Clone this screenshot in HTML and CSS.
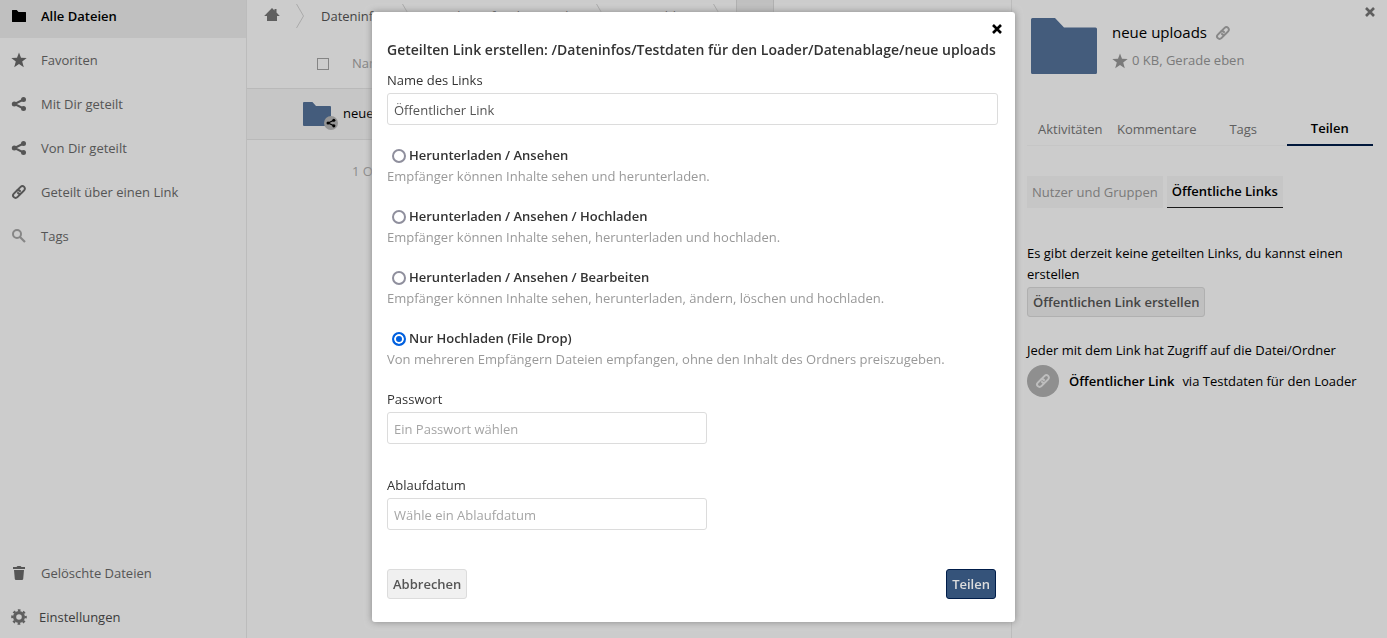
FILE: index.html
```html
<!DOCTYPE html>
<html lang="de">
<head>
  <meta charset="UTF-8">
  <meta name="viewport" content="width=device-width, initial-scale=1.0">
  <title>neue uploads - Dateien</title>
  <link rel="stylesheet" href="styles.css">
</head>
<body>

  <!-- Shared icon shapes -->
  <svg class="sprite" aria-hidden="true">
    <symbol id="icon-folder" viewBox="0 0 14 12">
      <path d="M0.5 0H4.7L6.5 2H13.5Q14 2 14 2.5V11.5Q14 12 13.5 12H0.5Q0 12 0 11.5V0.5Q0 0 0.5 0Z"/>
    </symbol>
    <symbol id="icon-folder-big" viewBox="0 0 66 56">
      <path d="M1.5 0H24L33 9.5H64.5Q66 9.5 66 11V54.5Q66 56 64.5 56H1.5Q0 56 0 54.5V1.5Q0 0 1.5 0Z"/>
    </symbol>
    <symbol id="icon-star" viewBox="0 0 16 16">
      <path d="M8 .4 10 5.8 15.7 6 11.2 9.5 12.8 15.2 8 11.9 3.2 15.2 4.8 9.5 .3 6 6 5.8Z"/>
    </symbol>
    <symbol id="icon-share" viewBox="0 0 16 16">
      <path d="M12.5 3.5 3.5 8 12.5 12.5" fill="none" stroke="currentColor" stroke-width="2"/>
      <circle cx="12.5" cy="3.5" r="2.5"/>
      <circle cx="3.3" cy="8" r="2.5"/>
      <circle cx="12.5" cy="12.5" r="2.5"/>
    </symbol>
    <symbol id="icon-link" viewBox="0 0 16 16">
      <g fill="none" stroke="currentColor" stroke-width="2" stroke-linecap="round" transform="rotate(-45 8 8)">
        <path d="M7.5 10.5H3.2A2.5 2.5 0 0 1 3.2 5.5H7A2.5 2.5 0 0 1 9.4 8"/>
        <path d="M8.5 5.5H12.8A2.5 2.5 0 0 1 12.8 10.5H9A2.5 2.5 0 0 1 6.6 8"/>
      </g>
    </symbol>
    <symbol id="icon-search" viewBox="0 0 16 16">
      <circle cx="6" cy="6" r="4" fill="none" stroke="currentColor" stroke-width="2"/>
      <path d="M9 9 14 14" stroke="currentColor" stroke-width="2.2"/>
    </symbol>
    <symbol id="icon-trash" viewBox="0 0 16 16">
      <path d="M6.5 1H9.5L10.5 2H14V4H2V2H5.5ZM3 5H13L12.2 14Q12 15 11 15H5Q4 15 3.8 14Z"/>
    </symbol>
    <symbol id="icon-gear" viewBox="0 0 16 16">
      <circle cx="8" cy="8" r="4.4" fill="none" stroke="currentColor" stroke-width="3.2"/>
      <circle cx="8" cy="8" r="6.7" fill="none" stroke="currentColor" stroke-width="2.2" stroke-dasharray="2.63 2.63" stroke-dashoffset="1.315"/>
    </symbol>
    <symbol id="icon-home" viewBox="0 0 16 16">
      <path d="M8 1 10.5 3.5V2H12.5V5.5L15.8 9H13V14H3V9H.2Z"/>
    </symbol>
    <symbol id="icon-close" viewBox="0 0 12 12">
      <path d="M2 2 10 10M10 2 2 10" stroke="currentColor" stroke-width="2.6"/>
    </symbol>
    <symbol id="icon-chevron" viewBox="0 0 8 24">
      <path d="M.5 0 7.5 12 .5 24" fill="none" stroke="currentColor"/>
    </symbol>
  </svg>

  <div class="app">
    <nav class="sidebar">
      <ul class="nav-list">
        <li><a class="nav-item active" href="#"><svg class="icon"><use href="#icon-folder"/></svg>Alle Dateien</a></li>
        <li><a class="nav-item" href="#"><svg class="icon"><use href="#icon-star"/></svg>Favoriten</a></li>
        <li><a class="nav-item" href="#"><svg class="icon"><use href="#icon-share"/></svg>Mit Dir geteilt</a></li>
        <li><a class="nav-item" href="#"><svg class="icon"><use href="#icon-share"/></svg>Von Dir geteilt</a></li>
        <li><a class="nav-item" href="#"><svg class="icon"><use href="#icon-link"/></svg>Geteilt über einen Link</a></li>
        <li><a class="nav-item" href="#"><svg class="icon faded"><use href="#icon-search"/></svg>Tags</a></li>
      </ul>
      <div class="nav-bottom">
        <a class="nav-item" href="#"><svg class="icon"><use href="#icon-trash"/></svg>Gelöschte Dateien</a>
        <button class="nav-item settings" type="button"><svg class="icon"><use href="#icon-gear"/></svg>Einstellungen</button>
      </div>
    </nav>

    <main class="content">
      <div class="breadcrumb">
        <a class="home" href="#" aria-label="Start"><svg class="icon"><use href="#icon-home"/></svg></a>
        <svg class="chevron"><use href="#icon-chevron"/></svg>
        <a class="crumb" href="#">Dateninfos</a>
        <svg class="chevron"><use href="#icon-chevron"/></svg>
        <a class="crumb" href="#">Testdaten für den Loader</a>
        <svg class="chevron"><use href="#icon-chevron"/></svg>
        <a class="crumb" href="#">Datenablage</a>
        <svg class="chevron"><use href="#icon-chevron"/></svg>
        <button class="new-button" type="button">+</button>
      </div>

      <table class="files">
        <thead>
          <tr>
            <th class="select-cell"><input class="checkbox" type="checkbox" aria-label="Alle auswählen"></th>
            <th class="name-head">Name</th>
          </tr>
        </thead>
        <tbody>
          <tr class="file-row">
            <td class="thumb-cell">
              <div class="thumb">
                <svg class="thumb-folder"><use href="#icon-folder"/></svg>
                <span class="badge"><svg><use href="#icon-share"/></svg></span>
              </div>
            </td>
            <td>neue uploads</td>
          </tr>
        </tbody>
        <tfoot>
          <tr>
            <td></td>
            <td class="summary">1 Ordner</td>
          </tr>
        </tfoot>
      </table>
    </main>

    <aside class="details">
      <button class="close details-close" type="button" aria-label="Details schließen"><svg><use href="#icon-close"/></svg></button>
      <div class="file-info">
        <svg class="preview"><use href="#icon-folder-big"/></svg>
        <div>
          <h2 class="file-name">neue uploads <svg class="icon"><use href="#icon-link"/></svg></h2>
          <div class="file-meta"><svg class="icon"><use href="#icon-star"/></svg>0 KB, Gerade eben</div>
        </div>
      </div>

      <div class="tabs">
        <button class="tab" type="button">Aktivitäten</button>
        <button class="tab" type="button">Kommentare</button>
        <button class="tab" type="button">Tags</button>
        <button class="tab selected" type="button">Teilen</button>
      </div>

      <div class="subtabs">
        <button class="subtab" type="button">Nutzer und Gruppen</button>
        <button class="subtab selected" type="button">Öffentliche Links</button>
      </div>

      <p class="hint">Es gibt derzeit keine geteilten Links, du kannst einen erstellen</p>
      <button class="button" type="button">Öffentlichen Link erstellen</button>

      <p class="access">Jeder mit dem Link hat Zugriff auf die Datei/Ordner</p>
      <div class="share-entry">
        <span class="avatar"><svg class="icon"><use href="#icon-link"/></svg></span>
        <strong>Öffentlicher Link</strong>
        <span>via Testdaten für den Loader</span>
      </div>
    </aside>
  </div>

  <div class="overlay">
    <form class="dialog" role="dialog" aria-labelledby="dialog-title">
      <button class="close dialog-close" type="button" aria-label="Schließen"><svg><use href="#icon-close"/></svg></button>
      <h1 class="dialog-title" id="dialog-title">Geteilten Link erstellen: /Dateninfos/Testdaten für den Loader/Datenablage/neue uploads</h1>

      <div class="field">
        <label for="link-name">Name des Links</label>
        <input class="text-input" id="link-name" type="text" value="Öffentlicher Link">
      </div>

      <div class="options">
        <div>
          <div class="option">
            <input type="radio" name="permission" id="perm-read">
            <label for="perm-read">Herunterladen / Ansehen</label>
          </div>
          <p>Empfänger können Inhalte sehen und herunterladen.</p>
        </div>
        <div>
          <div class="option">
            <input type="radio" name="permission" id="perm-upload">
            <label for="perm-upload">Herunterladen / Ansehen / Hochladen</label>
          </div>
          <p>Empfänger können Inhalte sehen, herunterladen und hochladen.</p>
        </div>
        <div>
          <div class="option">
            <input type="radio" name="permission" id="perm-edit">
            <label for="perm-edit">Herunterladen / Ansehen / Bearbeiten</label>
          </div>
          <p>Empfänger können Inhalte sehen, herunterladen, ändern, löschen und hochladen.</p>
        </div>
        <div>
          <div class="option">
            <input type="radio" name="permission" id="perm-drop" checked>
            <label for="perm-drop">Nur Hochladen (File Drop)</label>
          </div>
          <p>Von mehreren Empfängern Dateien empfangen, ohne den Inhalt des Ordners preiszugeben.</p>
        </div>
      </div>

      <div class="field short">
        <label for="password">Passwort</label>
        <input class="text-input" id="password" type="password" placeholder="Ein Passwort wählen">
      </div>
      <div class="field short expiry">
        <label for="expiry">Ablaufdatum</label>
        <input class="text-input" id="expiry" type="text" placeholder="Wähle ein Ablaufdatum">
      </div>

      <div class="actions">
        <button class="button" type="button">Abbrechen</button>
        <button class="button primary" type="submit">Teilen</button>
      </div>
    </form>
  </div>

</body>
</html>
```
FILE: styles.css
```css
* {
  box-sizing: border-box;
}

body {
  margin: 0;
  height: 100vh;
  overflow: hidden;
  font-family: 'Open Sans', sans-serif;
  font-size: 13px;
  line-height: 21px;
  color: #000;
  background: #fff;
}

h1, h2, p, ul {
  margin: 0;
  padding: 0;
}

ul {
  list-style: none;
}

a {
  color: inherit;
  text-decoration: none;
}

button, input {
  font: inherit;
}

button {
  margin: 0;
  border: none;
  background: none;
  cursor: pointer;
}

svg {
  fill: currentColor;
}

.sprite {
  position: absolute;
  width: 0;
  height: 0;
}

.icon {
  width: 16px;
  height: 16px;
  flex: none;
}

.app {
  display: flex;
  height: 100vh;
}

/* Sidebar */
.sidebar {
  display: flex;
  flex-direction: column;
  justify-content: space-between;
  flex: 0 0 247px;
  border-right: 1px solid #ebebeb;
}

.nav-list {
  margin-top: -6px;
}

.nav-bottom {
  margin-bottom: -1px;
}

.nav-item {
  display: flex;
  align-items: center;
  gap: 14px;
  width: 100%;
  height: 44px;
  padding: 0 11px;
  color: #6b6b6b;
}

.nav-item.active {
  background: #f1f1f1;
  color: #000;
  font-weight: 600;
}

.nav-item.active .icon {
  height: 12px;
}

.nav-item .faded {
  color: #a8a8a8;
}

.settings {
  gap: 12px;
  color: #4d4d4d;
}

.settings .icon {
  color: #777;
}

/* File list */
.content {
  flex: 1;
  min-width: 0;
}

.breadcrumb {
  display: flex;
  height: 40px;
  color: #555;
  white-space: nowrap;
}

.home {
  padding: 7px 16px 0 17px;
  color: #777;
}

.chevron {
  width: 8px;
  height: 24px;
  margin-top: 4px;
  flex: none;
  color: #d5d5d5;
}

.crumb {
  padding: 6px 15px 0 17px;
}

.new-button {
  width: 38px;
  height: 32px;
  margin-left: 15px;
  border: 1px solid #dcdcdc;
  border-top: none;
  background: #f0f0f0;
}

.files {
  width: 100%;
  border-collapse: collapse;
}

.files th, .files td {
  padding: 0;
  text-align: left;
  font-weight: 400;
}

.files th {
  height: 48px;
}

.select-cell {
  width: 96px;
}

.files .select-cell {
  padding-left: 70px;
}

.checkbox {
  display: block;
  appearance: none;
  width: 12px;
  height: 12px;
  margin: 0;
  border: 1px solid #a5a5a5;
}

.files .name-head {
  padding-left: 9px;
  color: #a5a5a5;
}

.file-row {
  height: 51px;
  border-top: 1px solid #e8e8e8;
  border-bottom: 1px solid #e8e8e8;
  background: #f8f8f8;
}

.files .thumb-cell {
  padding-left: 56px;
}

.thumb {
  position: relative;
  width: 28px;
  height: 24px;
}

.thumb-folder {
  display: block;
  width: 28px;
  height: 24px;
  color: #55739b;
}

.badge {
  position: absolute;
  right: -7px;
  bottom: -4px;
  display: flex;
  align-items: center;
  justify-content: center;
  width: 14px;
  height: 14px;
  border-radius: 50%;
  background: #b9b9b9;
}

.badge svg {
  width: 10px;
  height: 10px;
}

.files .summary {
  height: 64px;
  padding-left: 9px;
  color: #b0b0b0;
}

/* Details panel */
.details {
  position: relative;
  flex: 0 0 376px;
  padding: 18px 14px 0 15px;
  border-left: 1px solid #ebebeb;
}

.close {
  position: absolute;
  display: flex;
  padding: 0;
}

.close svg {
  width: 12px;
  height: 12px;
}

.details-close {
  top: 6px;
  right: 11px;
  color: #777;
}

.file-info {
  display: flex;
  gap: 15px;
  padding-left: 4px;
}

.preview {
  width: 66px;
  height: 56px;
  color: #55739b;
}

.file-name {
  display: flex;
  align-items: center;
  gap: 8px;
  margin-top: 4px;
  font-size: 15px;
  font-weight: 400;
}

.file-name .icon {
  color: #aaa;
}

.file-meta {
  display: flex;
  align-items: center;
  gap: 4px;
  margin-top: 7px;
  color: #999;
}

.tabs {
  display: flex;
  margin-top: 44px;
}

.tab {
  flex: 1 1 0;
  height: 28px;
  padding: 0 0 5px;
  border-bottom: 1px solid #f8f8f8;
  color: #777;
}

.tab.selected {
  border-bottom: 2px solid #001d4a;
  color: #000;
  font-weight: 600;
}

.subtabs {
  display: flex;
  gap: 4px;
  margin-top: 30px;
}

.subtab {
  height: 32px;
  padding: 0 5px;
  background: #f8f8f8;
  color: #999;
}

.subtab.selected {
  border-bottom: 1px solid #222;
  color: #000;
  font-weight: 600;
}

.hint {
  margin-top: 35px;
  margin-bottom: 2px;
}

.button {
  height: 30px;
  padding: 0 5px;
  border: 1px solid #dcdcdc;
  border-radius: 3px;
  background: #f0f0f0;
  color: #555;
  font-weight: 600;
}

.button.primary {
  border-color: #001d4a;
  background: #35537a;
  color: #ddd;
}

.access {
  margin-top: 23px;
}

.share-entry {
  display: flex;
  align-items: center;
  gap: 8px;
  margin-top: 4px;
}

.share-entry strong {
  font-weight: 600;
}

.avatar {
  display: flex;
  align-items: center;
  justify-content: center;
  width: 32px;
  height: 32px;
  margin-right: 2px;
  border-radius: 50%;
  background: #b3b3b3;
  color: #eee;
}

/* Share dialog */
.overlay {
  position: fixed;
  inset: 0;
  padding-top: 12px;
  background: rgba(0, 0, 0, 0.2);
}

.dialog {
  position: relative;
  width: fit-content;
  min-width: 643px;
  margin: 0 auto;
  padding: 27px 17px 23px 15px;
  border-radius: 3px;
  background: #fff;
  box-shadow: 0 0 7px #888;
  color: #333;
}

.dialog-close {
  top: 11px;
  right: 12px;
  color: #000;
}

.dialog-title {
  margin-bottom: 10px;
  font-size: 14px;
  font-weight: 600;
}

.field label {
  display: block;
  margin-bottom: 2px;
}

.text-input {
  display: block;
  width: 100%;
  height: 32px;
  padding: 2px 6px 0;
  border: 1px solid #dcdcdc;
  border-radius: 3px;
  outline: none;
  background: #fff;
  color: #555;
}

.text-input::placeholder {
  color: #a5a5a5;
}

.short .text-input {
  width: 320px;
}

.options {
  display: flex;
  flex-direction: column;
  gap: 19px;
  margin: 20px 0 19px;
}

.options p {
  color: #999;
}

.option {
  display: flex;
  align-items: center;
  gap: 3px;
  padding-left: 5px;
}

.option label {
  font-weight: 600;
}

.option input {
  appearance: none;
  width: 14px;
  height: 14px;
  margin: 0;
  border: 2px solid #8f8f9d;
  border-radius: 50%;
  background: #fff;
}

.option input:checked {
  border-color: #0060df;
  background: #0060df;
  box-shadow: inset 0 0 0 2px #fff;
}

.expiry {
  margin-top: 31px;
}

.actions {
  display: flex;
  justify-content: space-between;
  margin-top: 39px;
  padding-right: 2px;
}
```
